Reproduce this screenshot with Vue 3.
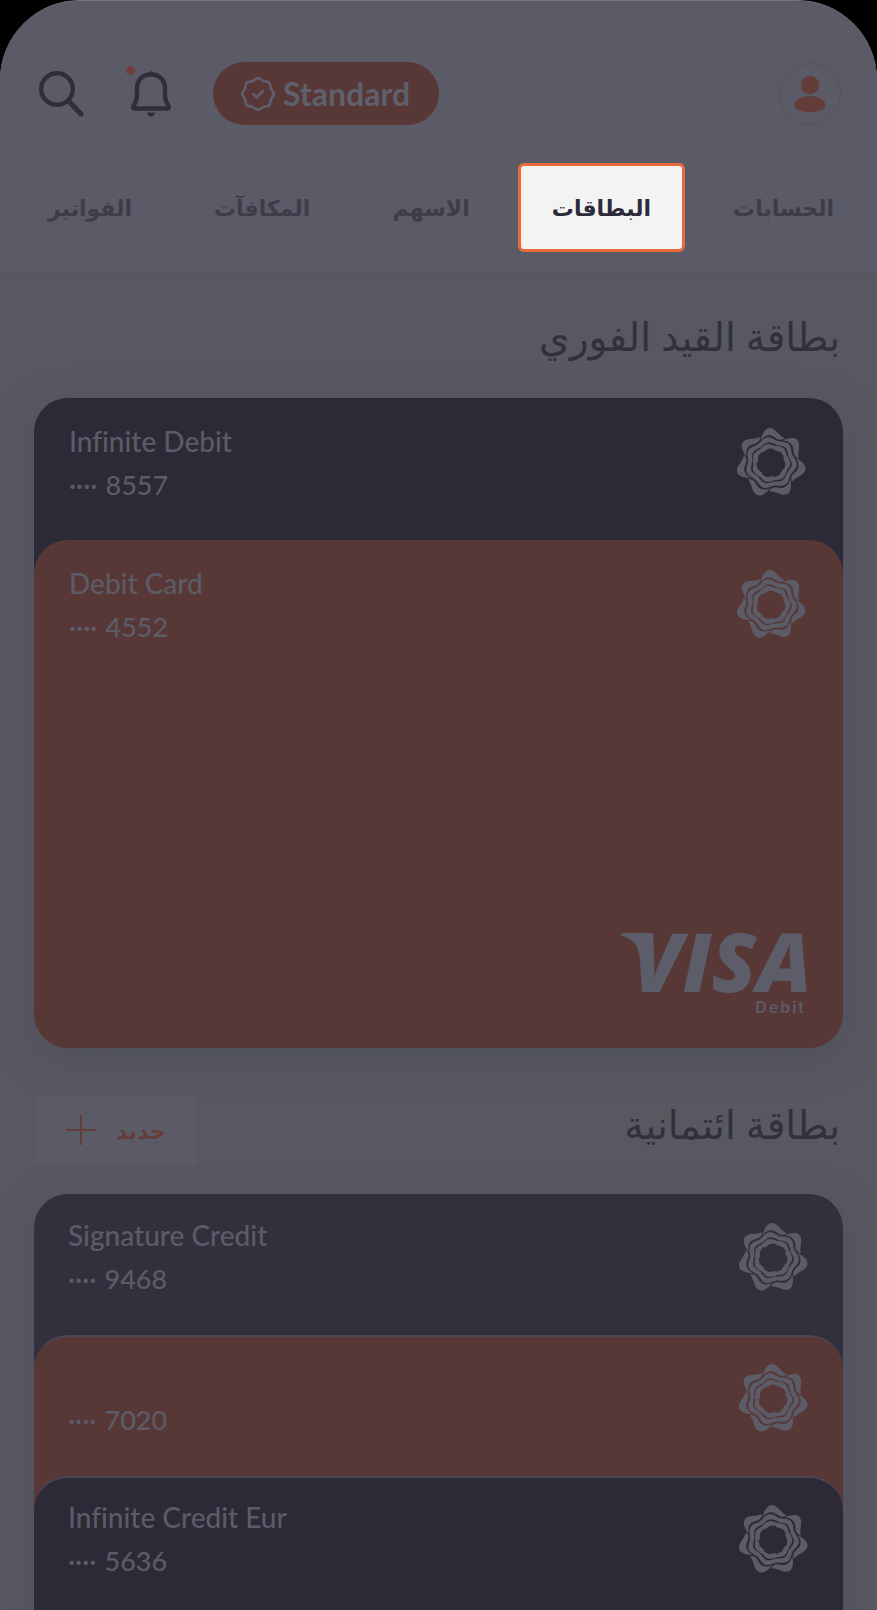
<script setup>
import { ref } from 'vue';

const tabs = ['الحسابات', 'البطاقات', 'الاسهم', 'المكافآت', 'الفواتير'];
const activeTab = ref('البطاقات');

const debitCards = [
  { name: 'Infinite Debit', digits: '8557', theme: 'dark' },
  { name: 'Debit Card', digits: '4552', theme: 'orange', full: true },
];

const creditCards = [
  { name: 'Signature Credit', digits: '9468', theme: 'plum' },
  { name: '', digits: '7020', theme: 'orange' },
  { name: 'Infinite Credit Eur', digits: '5636', theme: 'dark' },
];

const sections = [
  { title: 'بطاقة القيد الفوري', cards: debitCards, canAdd: false },
  { title: 'بطاقة ائتمانية', cards: creditCards, canAdd: true },
];

// scalloped edge of the membership badge
const badgePath = (() => {
  const points = [];
  for (let i = 0; i <= 96; i++) {
    const a = (i / 96) * Math.PI * 2;
    const r = 14 + 0.8 * Math.cos(a * 8);
    points.push(`${(16 + r * Math.sin(a)).toFixed(2)} ${(16 - r * Math.cos(a)).toFixed(2)}`);
  }
  return `M${points.join('L')}Z`;
})();
</script>

<template>
  <div class="page" dir="rtl">
    <header class="header">
      <div class="toolbar">
        <button class="avatar" type="button" aria-label="Profile">
          <svg width="32" height="38" viewBox="0 0 32 38">
            <circle cx="16" cy="10" r="9.2" />
            <path d="M.5 30C1 24.500 8 21 16 21s15 3.500 15.500 9c0 4.500-6 7-15.500 7S.5 34.500.5 30Z" />
          </svg>
        </button>
        <div class="actions" dir="ltr">
          <button class="icon-button" type="button" aria-label="Search">
            <svg width="46" height="48" viewBox="0 0 46 48">
              <circle cx="19" cy="19" r="15.800" />
              <path d="M30.500 31 43 44" stroke-width="5" />
            </svg>
          </button>
          <button class="icon-button bell" type="button" aria-label="Notifications">
            <svg width="42" height="48" viewBox="0 0 42 48">
              <path d="M21 4.500C12.500 4.500 7 10 7 18.500v7c0 5-1.500 7.500-3.500 10.500-.8 1.500-.3 2.500 1.200 2.500h32.600c1.500 0 2-1 1.200-2.500C36.500 33 35 30.500 35 25.500v-7C35 10 29.500 4.500 21 4.500Z" />
              <path class="solid" d="M16.500 4.500 21 1l4.500 3.500ZM17 42.500h8c0 2.200-1.600 4-4 4s-4-1.800-4-4Z" />
            </svg>
            <span class="dot"></span>
          </button>
          <button class="plan" type="button">
            <svg width="34" height="34" viewBox="0 0 32 32">
              <path :d="badgePath" />
              <path d="m11.500 16 3.200 3.200 5.800-6" />
            </svg>
            Standard
          </button>
        </div>
      </div>
      <nav class="tabs">
        <button
          v-for="tab in tabs"
          :key="tab"
          type="button"
          class="tab"
          :class="{ active: tab === activeTab }"
          @click="activeTab = tab"
        >{{ tab }}</button>
      </nav>
    </header>

    <main>
      <section v-for="section in sections" :key="section.title" class="section">
        <div class="section-head">
          <h2>{{ section.title }}</h2>
          <button v-if="section.canAdd" class="add" type="button">
            جديد
            <svg width="30" height="30" viewBox="0 0 30 30"><path d="M15 0v30M0 15h30" /></svg>
          </button>
        </div>
        <div class="stack" dir="ltr">
          <article
            v-for="card in section.cards"
            :key="card.digits"
            class="card"
            :class="[card.theme, { full: card.full, lined: section.canAdd }]"
          >
            <div class="card-top">
              <div class="card-info">
                <p class="name">{{ card.name }}</p>
                <p class="number"><span>····</span><span>{{ card.digits }}</span></p>
              </div>
              <svg class="rosette" width="70" height="70" viewBox="-105 -105 210 210">
                <g v-for="n in 7" :key="n" :transform="`rotate(${(n - 1) * 360 / 7})`">
                  <path d="M-31-69C-28-82-19-105-4-105C15-105 20-84 41-74C31-67 22-69 14-75C6-81 0-84-8-83C-18-82-24-76-31-69Z" />
                  <path d="M-34-58C-28-69-18-78-6-77C9-75 14-62 31-65C22-55 13-55 6-59C-2-63-8-64-15-60C-23-56-26-49-36-44Z" />
                  <path d="M-31-40C-27-49-16-58-6-57C4-56 9-49 21-52C14-42 6-42 0-43C-10-45-15-37-25-31Z" />
                </g>
              </svg>
            </div>
            <div v-if="card.full" class="brand">
              <svg width="186" height="62" viewBox="0 0 186 62" role="img" aria-label="VISA">
                <path d="M0 4c0-1 2-2 5-2h28l-3 22-11 0c-1-9-4-15-19-20Z" />
                <text x="12" y="61">VISA</text>
              </svg>
              <span>Debit</span>
            </div>
          </article>
        </div>
      </section>
    </main>
  </div>
</template>

<style>
body {
  margin: 0;
  background: #000;
}
</style>

<style scoped>
.page {
  height: 100vh;
  overflow: hidden;
  box-sizing: border-box;
  border-top: 1px solid #777782;
  border-radius: 80px 80px 0 0;
  background: #585861;
  font-family: Lato, "DejaVu Sans", sans-serif;
}

button {
  padding: 0;
  border: 0;
  background: none;
  font-family: inherit;
  cursor: pointer;
}

svg {
  display: block;
}

/* Header */
.header {
  box-sizing: border-box;
  height: 272px;
  padding-top: 61px;
  background: #5b5b67;
  box-shadow: 0 0 3px #53535d;
}

.toolbar {
  display: flex;
  align-items: center;
  justify-content: space-between;
  padding: 0 36px 0 38px;
}

.avatar {
  display: flex;
  align-items: center;
  justify-content: center;
  box-sizing: border-box;
  width: 62px;
  height: 62px;
  border: 1px solid #545461;
  border-radius: 50%;
}

.avatar svg {
  fill: #643d3a;
}

.actions {
  display: flex;
  align-items: center;
}

.icon-button {
  position: relative;
}

.icon-button svg {
  fill: none;
  stroke: #302e3b;
  stroke-width: 4.400;
  stroke-linecap: round;
}

.icon-button .solid {
  fill: #302e3b;
  stroke: none;
}

.bell {
  margin: 0 41px 0 46px;
}

.dot {
  position: absolute;
  top: -4px;
  left: -4px;
  width: 9px;
  height: 9px;
  border-radius: 50%;
  background: #70413c;
}

.plan {
  display: flex;
  align-items: center;
  gap: 8px;
  height: 63px;
  padding: 0 29px 0 28px;
  border-radius: 32px;
  background: #573836;
  color: #5f5f6d;
  font-size: 32px;
  font-weight: 700;
}

.plan svg {
  fill: none;
  stroke: #5f5f6d;
  stroke-width: 2.400;
  stroke-linecap: round;
  stroke-linejoin: round;
}

.tabs {
  display: flex;
  justify-content: space-between;
  margin-top: 38px;
  padding: 0 9px 0 14px;
}

.tab {
  box-sizing: border-box;
  height: 89px;
  padding: 0 31px;
  border: 3px solid transparent;
  border-radius: 6px;
  color: #3e3c49;
  font-size: 22px;
  font-weight: 700;
}

.tab.active {
  border-color: #ea6a3a;
  background: #f3f3f3;
  color: #2d2b39;
}

/* Sections */
.section {
  padding: 0 34px;
}

.section-head {
  display: flex;
  align-items: center;
  justify-content: space-between;
  height: 125px;
}

.section + .section .section-head {
  align-items: flex-start;
  box-sizing: border-box;
  height: 146px;
  padding-top: 47px;
}

h2 {
  margin: 0;
  padding-right: 3px;
  color: #32303d;
  font-size: 39px;
  font-weight: 400;
  line-height: 58px;
}

.add {
  display: flex;
  align-items: center;
  gap: 20px;
  height: 70px;
  padding: 0 30px 0 32px;
  border-radius: 4px;
  background: #5b5b67;
  color: #643d3a;
  font-size: 22px;
  font-weight: 700;
}

.add svg {
  stroke: #643d3a;
  stroke-width: 2;
}

/* Stacked cards */
.stack {
  border-radius: 34px;
  box-shadow: 0 10px 34px #4e505b;
}

.card {
  display: flex;
  flex-direction: column;
  justify-content: space-between;
  box-sizing: border-box;
  height: 176px;
  padding: 25px 37px 31px 35px;
  border-radius: 34px 34px 0 0;
  color: #5c5b67;
}

.card + .card {
  margin-top: -34px;
}

.card.full {
  height: 508px;
  border-radius: 34px;
}

.card.lined {
  padding: 23px 35px 31px 34px;
}

.card.lined + .card.lined {
  margin-top: -35px;
  padding-top: 21px;
  border-top: 2px solid #4b4652;
}

.card.dark {
  background: #2b2a36;
}

.card.plum {
  background: #32303d;
}

.card.orange {
  background: #573836;
}

.card-top {
  display: flex;
  justify-content: space-between;
  align-items: flex-start;
}

.card-info p {
  height: 44px;
  margin: 0;
  font-size: 27px;
  font-weight: 500;
  font-variant-ligatures: none;
  line-height: 36px;
}

.card-info .name {
  font-size: 28px;
}

.number {
  display: flex;
  gap: 8px;
}

.rosette {
  margin-top: 5px;
  fill: #5c5c68;
}

.card.lined .rosette {
  margin-top: 6px;
}

.brand {
  align-self: flex-end;
  text-align: right;
}

.brand svg {
  overflow: visible;
  fill: #5d5c69;
}

.brand text {
  font-family: "Open Sans", sans-serif;
  font-size: 82px;
  font-style: italic;
  font-weight: 800;
}

.brand span {
  display: block;
  margin-top: 4px;
  font-family: Inter, sans-serif;
  font-size: 16px;
  font-weight: 600;
  letter-spacing: 2px;
  line-height: 20px;
}
</style>
